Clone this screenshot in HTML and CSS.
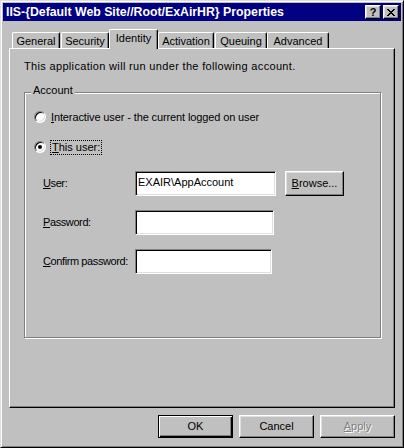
FILE: index.html
```html
<!DOCTYPE html>
<html>
<head>
<meta charset="utf-8">
<link rel="stylesheet" href="styles.css">
</head>
<body>
<div class="window">
  <div class="titlebar">
    <span class="title">IIS-{Default Web Site//Root/ExAirHR} Properties</span>
    <div class="tb-buttons">
      <span class="tb-btn help">?</span>
      <span class="tb-btn close"><svg width="8" height="7" viewBox="0 0 8 7"><path d="M0 0h2v1h1v1h2v-1h1v-1h2v1h-1v1h-1v1h-1v1h1v1h1v1h1v1h-2v-1h-1v-1h-2v1h-1v1h-2v-1h1v-1h1v-1h1v-1h-1v-1h-1v-1h-1z" fill="#000"/></svg></span>
    </div>
  </div>
  <div class="client">
    <div class="tabs">
      <div class="tab t-general">General</div>
      <div class="tab t-security">Security</div>
      <div class="tab t-identity selected">Identity</div>
      <div class="tab t-activation">Activation</div>
      <div class="tab t-queuing">Queuing</div>
      <div class="tab t-advanced">Advanced</div>
    </div>
    <div class="panel">
      <p class="intro">This application will run under the following account.</p>
      <div class="group">
        <span class="group-label">Account</span>
        <div class="radio-row">
          <span class="radio"></span>
          <span class="rlabel narrow"><u>I</u>nteractive user - the current logged on user</span>
        </div>
        <div class="radio-row second">
          <span class="radio checked"></span>
          <span class="rlabel focus"><u>T</u>his user:</span>
        </div>
        <div class="fields">
          <div class="field">
            <span class="flabel"><u>U</u>ser:</span>
            <span class="edit e-user">EXAIR\AppAccount</span>
            <span class="btn browse"><u>B</u>rowse...</span>
          </div>
          <div class="field">
            <span class="flabel"><u>P</u>assword:</span>
            <span class="edit e-pass"></span>
          </div>
          <div class="field">
            <span class="flabel"><u>C</u>onfirm password:</span>
            <span class="edit e-confirm"></span>
          </div>
        </div>
      </div>
    </div>
    <div class="actions">
      <span class="btn dlg default">OK</span>
      <span class="btn dlg">Cancel</span>
      <span class="btn dlg disabled"><u>A</u>pply</span>
    </div>
  </div>
</div>
</body>
</html>
```

FILE: styles.css
```css
* { box-sizing: border-box; }
html, body { margin: 0; padding: 0; }
body {
  font: 11px/13px "Liberation Sans", Arial, sans-serif;
  color: #000;
  background: #c0c0c0;
}
u { text-decoration: underline; text-underline-offset: 1px; }

.window {
  width: 404px;
  height: 448px;
  background: #c0c0c0;
  border: 1px solid;
  border-color: #dfdfdf #000 #000 #dfdfdf;
  box-shadow: inset 1px 1px #fff, inset -1px -1px #808080;
  padding: 2px;
  display: flex;
  flex-direction: column;
}

.titlebar {
  height: 18px;
  flex: none;
  background: #000080;
  color: #fff;
  display: flex;
  align-items: center;
  padding: 0 2px 0 3px;
}
.title {
  flex: 1;
  font-weight: bold;
  font-size: 12.3px;
  white-space: nowrap;
}
.tb-buttons { display: flex; }
.tb-btn {
  width: 16px;
  height: 14px;
  background: #c0c0c0;
  border: 1px solid;
  border-color: #fff #000 #000 #fff;
  box-shadow: inset -1px -1px #808080, inset 1px 1px #dfdfdf;
  display: flex;
  align-items: center;
  justify-content: center;
  color: #000;
  font-weight: bold;
  font-size: 11px;
  line-height: 11px;
}
.tb-btn.close { margin-left: 2px; }

.client {
  flex: 1;
  display: flex;
  flex-direction: column;
  padding: 8px 6px 7px 6px;
}

.tabs {
  flex: none;
  height: 20px;
  display: flex;
  align-items: flex-start;
  padding-left: 3px;
  margin-bottom: -1px;
  position: relative;
  z-index: 1;
}
.tab {
  margin-top: 3px;
  height: 16px;
  background: #c0c0c0;
  border-top: 1px solid #fff;
  border-left: 1px solid #fff;
  border-right: 1px solid #000;
  border-top-left-radius: 2px;
  border-top-right-radius: 2px;
  box-shadow: inset -1px 0 #808080;
  text-align: center;
  padding-top: 2px;
  white-space: nowrap;
}
.tab.selected {
  margin-top: 0;
  height: 20px;
  padding-top: 2px;
}
.t-general { width: 48px; }
.t-security { width: 48px; margin-left: 1px; }
.t-identity { width: 49px; }
.t-activation { width: 56px; }
.t-queuing { width: 52px; margin-left: 1px; }
.t-advanced { width: 62px; }

.panel {
  flex: 1;
  border: 1px solid;
  border-color: #fff #000 #000 #fff;
  box-shadow: inset -1px -1px #808080;
  padding: 11px 13px 0 14px;
}
.intro { margin: 0; letter-spacing: 0.33px; }

.group {
  position: relative;
  margin-top: 19px;
  height: 246px;
  border: 1px solid #808080;
  box-shadow: 1px 1px 0 #fff, inset 1px 1px 0 #fff;
  padding: 16px 0 0 9px;
}
.group-label {
  position: absolute;
  top: -9px;
  left: 6px;
  padding: 0 2px;
  background: #c0c0c0;
}

.radio-row {
  display: flex;
  align-items: center;
  height: 16px;
}
.radio-row.second { margin-top: 14px; }
.radio {
  width: 12px;
  height: 12px;
  border-radius: 50%;
  border: 1px solid;
  border-color: #808080 #fff #fff #808080;
  box-shadow: inset 1px 1px #000, inset -1px -1px #dfdfdf;
  background: #fff;
  margin-right: 4px;
  display: flex;
  align-items: center;
  justify-content: center;
}
.radio.checked::after {
  content: "";
  width: 4px;
  height: 4px;
  border-radius: 50%;
  background: #000;
}
.rlabel {
  border: 1px solid transparent;
  padding: 0 1px 0 0;
  line-height: 13px;
}
.rlabel.narrow { letter-spacing: -0.12px; }
.rlabel.focus { border: 1px dotted #000; padding: 0 1px; }

.fields {
  margin-top: 16px;
  padding-left: 9px;
  display: flex;
  flex-direction: column;
  gap: 14px;
}
.field {
  display: flex;
  align-items: center;
  height: 25px;
}
.flabel { width: 92px; flex: none; white-space: nowrap; letter-spacing: -0.4px; }
.edit {
  height: 25px;
  background: #fff;
  border: 1px solid;
  border-color: #808080 #fff #fff #808080;
  box-shadow: inset 1px 1px #000, inset -1px -1px #dfdfdf;
  padding: 4px 2px 0 2px;
  white-space: nowrap;
}
.e-user { width: 141px; }
.e-pass { width: 139px; }
.e-confirm { width: 137px; }

.btn {
  background: #c0c0c0;
  border: 1px solid;
  border-color: #fff #000 #000 #fff;
  box-shadow: inset -1px -1px #808080, inset 1px 1px #dfdfdf;
  display: flex;
  align-items: center;
  justify-content: center;
}
.browse {
  width: 59px;
  height: 25px;
  margin-left: 9px;
}

.actions {
  flex: none;
  display: flex;
  justify-content: flex-end;
  gap: 6px;
  margin-top: 7px;
}
.dlg { width: 75px; height: 23px; }
.dlg.default {
  border-color: #000;
  box-shadow: inset 1px 1px #fff, inset -1px -1px #000, inset -2px -2px #808080;
}
.dlg.disabled {
  color: #808080;
  text-shadow: 1px 1px 0 #fff;
}
```
